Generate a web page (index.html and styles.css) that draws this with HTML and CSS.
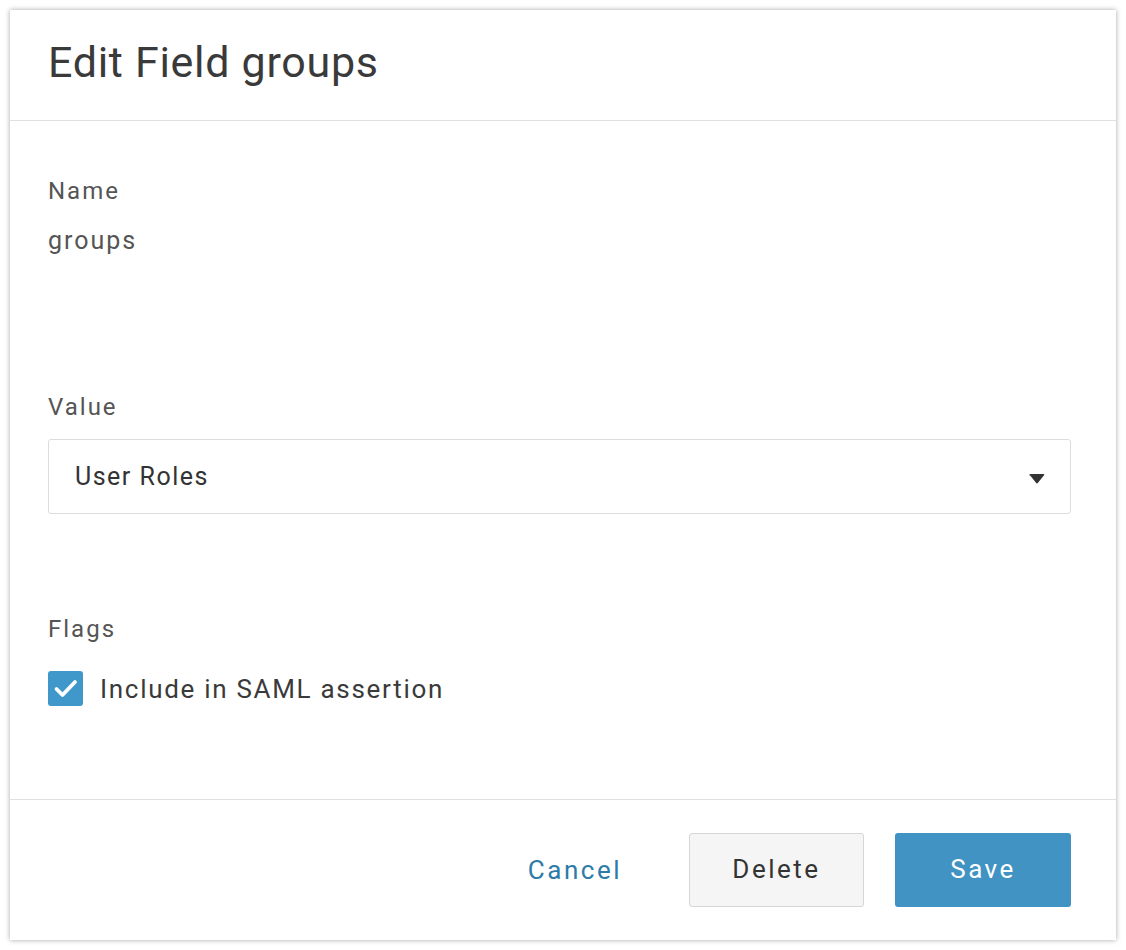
FILE: index.html
```html
<!DOCTYPE html>
<html>
<head>
<meta charset="utf-8">
<link rel="stylesheet" href="styles.css">
</head>
<body>
<div class="dialog">
  <div class="header"><h1 class="title">Edit Field groups</h1></div>
  <div class="content">
    <div class="label name-label">Name</div>
    <div class="value-text">groups</div>
    <div class="label value-label">Value</div>
    <div class="select">
      <span class="select-text">User Roles</span>
      <svg class="caret" width="16" height="10" viewBox="0 0 16 10"><path d="M0 1.5 Q0 0 1.5 0 H14.5 Q16 0 15 1.2 L9 8.8 Q8 10 7 8.8 L1 1.2 Z" fill="#333"/></svg>
    </div>
    <div class="label flags-label">Flags</div>
    <label class="check-row">
      <span class="checkbox"><svg width="35" height="35" viewBox="0 0 35 35"><path d="M8.5 18 L14.5 24 L27 11" fill="none" stroke="#fff" stroke-width="3.8" stroke-linecap="round" stroke-linejoin="round"/></svg></span>
      <span class="check-label">Include in SAML assertion</span>
    </label>
  </div>
  <div class="footer">
    <button class="btn btn-link">Cancel</button>
    <button class="btn btn-default">Delete</button>
    <button class="btn btn-primary">Save</button>
  </div>
</div>
</body>
</html>
```
FILE: styles.css
```css
html, body { margin: 0; padding: 0; background: #fff; }
body { padding: 10px; font-family: Roboto, "Liberation Sans", sans-serif; }
.dialog {
  width: 1106px;
  height: 930px;
  background: #fff;
  box-shadow: 0 0 5px rgba(0,0,0,0.35);
  display: flex;
  flex-direction: column;
  box-sizing: border-box;
}
.header {
  height: 111px;
  box-sizing: border-box;
  border-bottom: 1px solid #e0e0e0;
  display: flex;
  align-items: center;
  padding: 0 0 6px 38px;
}
.title {
  margin: 0;
  font-weight: 400;
  font-size: 43px;
  letter-spacing: 0.7px;
  color: #3a3a3a;
}
.content {
  flex: 1;
  padding: 55px 45px 0 38px;
  display: flex;
  flex-direction: column;
  align-items: flex-start;
}
.label {
  font-size: 24px;
  line-height: 30px;
  color: #555;
  letter-spacing: 2px;
}
.value-text {
  font-size: 25px;
  line-height: 30px;
  color: #555;
  letter-spacing: 2px;
  margin-top: 20px;
}
.value-label { margin-top: 136px; }
.select {
  margin-top: 17px;
  align-self: stretch;
  height: 75px;
  box-sizing: border-box;
  border: 1px solid #dcdcdc;
  border-radius: 3px;
  display: flex;
  align-items: center;
  justify-content: space-between;
  padding: 0 25px 0 26px;
}
.select-text { font-size: 25px; color: #333; letter-spacing: 1.5px; }
.caret { display: block; margin-top: 4px; }
.flags-label { margin-top: 100px; }
.check-row {
  margin-top: 27px;
  display: flex;
  align-items: center;
  gap: 17px;
}
.checkbox {
  width: 35px;
  height: 35px;
  border-radius: 3px;
  background: #3f98c9;
  display: block;
}
.checkbox svg { display: block; }
.check-label { font-size: 26px; color: #3a3a3a; letter-spacing: 1.7px; }
.footer {
  height: 141px;
  box-sizing: border-box;
  border-top: 1px solid #e0e0e0;
  display: flex;
  align-items: center;
  justify-content: flex-end;
  padding: 0 45px 0 0;
}
.btn {
  font-family: Roboto, "Liberation Sans", sans-serif;
  font-size: 26px;
  letter-spacing: 2.5px;
  height: 74px;
  border-radius: 3px;
  cursor: pointer;
  padding-bottom: 3px;
}
.btn-link {
  background: none;
  border: none;
  color: #2d7ba8;
  padding: 0;
  margin-right: 67px;
}
.btn-default {
  width: 175px;
  background: #f5f5f5;
  border: 1px solid #d6d6d6;
  color: #333;
  margin-right: 31px;
}
.btn-primary {
  width: 176px;
  background: #4093c2;
  border: none;
  color: #fff;
}
```
